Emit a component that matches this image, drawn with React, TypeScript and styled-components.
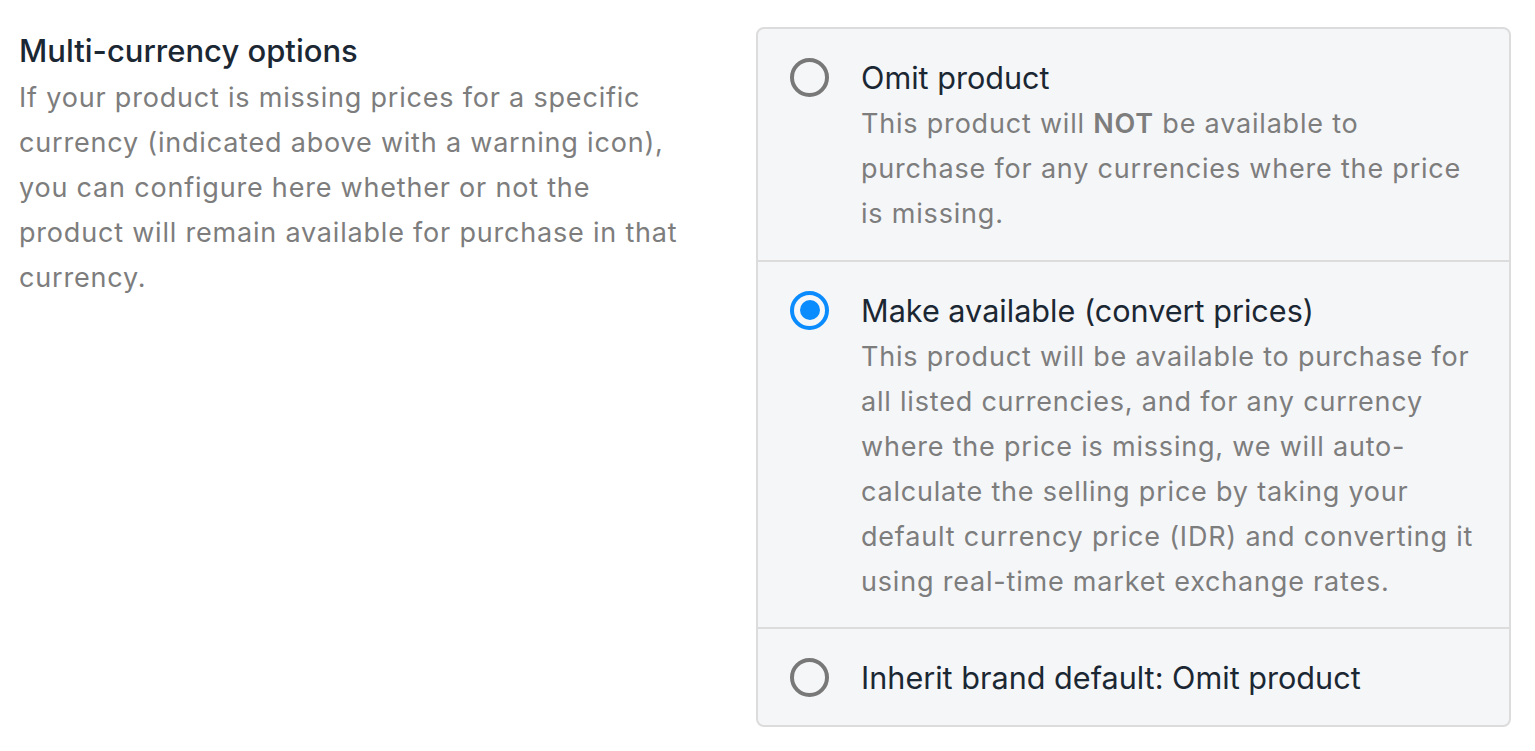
import React from "react";
import styled, { createGlobalStyle } from "styled-components";

const Global = createGlobalStyle`
  html, body { margin: 0; padding: 0; background: #ffffff; }
  body { font-family: Inter, "Noto Sans", sans-serif; -webkit-font-smoothing: antialiased; }
`;

const Page = styled.div`
  display: grid;
  grid-template-columns: 680px 755px;
  column-gap: 57px;
  padding: 27px 0 0 19px;
  align-items: start;
`;

const Intro = styled.div`
  display: flex;
  flex-direction: column;
  padding-top: 4px;
`;

const Heading = styled.h2`
  margin: 0;
  font-size: 31px;
  font-weight: 500;
  line-height: 40px;
  color: #1b2733;
`;

const Description = styled.p`
  margin: 4px 0 0;
  font-size: 27px;
  line-height: 45px;
  letter-spacing: 0.8px;
  color: #7d7d7d;
  font-weight: 400;
`;

const Card = styled.div`
  border: 2px solid #dcdcdc;
  border-radius: 8px;
  background: #f5f6f8;
  display: flex;
  flex-direction: column;
  overflow: hidden;
`;

const Option = styled.label`
  display: grid;
  grid-template-columns: 39px 1fr;
  column-gap: 32px;
  padding: 26px 26px 23.5px 32px;
  cursor: pointer;
  & + & {
    border-top: 2px solid #dcdcdc;
  }
`;

const Radio = styled.span<{ $checked: boolean }>`
  width: 39px;
  height: 39px;
  box-sizing: border-box;
  border-radius: 50%;
  border: 4px solid ${(p) => (p.$checked ? "#0a8cff" : "#787878")};
  display: flex;
  align-items: center;
  justify-content: center;
  margin-top: 3px;
  &::after {
    content: "";
    width: 20px;
    height: 20px;
    border-radius: 50%;
    background: ${(p) => (p.$checked ? "#0a8cff" : "transparent")};
  }
`;

const OptionBody = styled.div`
  display: flex;
  flex-direction: column;
`;

const OptionTitle = styled.span`
  font-size: 30.6px;
  line-height: 46px;
  color: #1b2733;
  font-weight: 400;
`;

const OptionText = styled.span`
  font-size: 27px;
  line-height: 45px;
  letter-spacing: 0.8px;
  color: #7d7d7d;
  b {
    font-weight: 600;
  }
`;

const options: { title: string; text?: React.ReactNode; checked: boolean }[] = [
  {
    title: "Omit product",
    text: (
      <>
        This product will <b>NOT</b> be available to purchase for any currencies where the price is missing.
      </>
    ),
    checked: false,
  },
  {
    title: "Make available (convert prices)",
    text:
      "This product will be available to purchase for all listed currencies, and for any currency where the price is missing, we will auto-calculate the selling price by taking your default currency price (IDR) and converting it using real-time market exchange rates.",
    checked: true,
  },
  { title: "Inherit brand default: Omit product", checked: false },
];

export default function App() {
  return (
    <>
      <Global />
      <Page>
        <Intro>
          <Heading>Multi-currency options</Heading>
          <Description>
            If your product is missing prices for a specific currency (indicated above with a warning icon), you can
            configure here whether or not the product will remain available for purchase in that currency.
          </Description>
        </Intro>
        <Card>
          {options.map((o) => (
            <Option key={o.title}>
              <Radio $checked={o.checked} />
              <OptionBody>
                <OptionTitle>{o.title}</OptionTitle>
                {o.text && <OptionText>{o.text}</OptionText>}
              </OptionBody>
            </Option>
          ))}
        </Card>
      </Page>
    </>
  );
}
